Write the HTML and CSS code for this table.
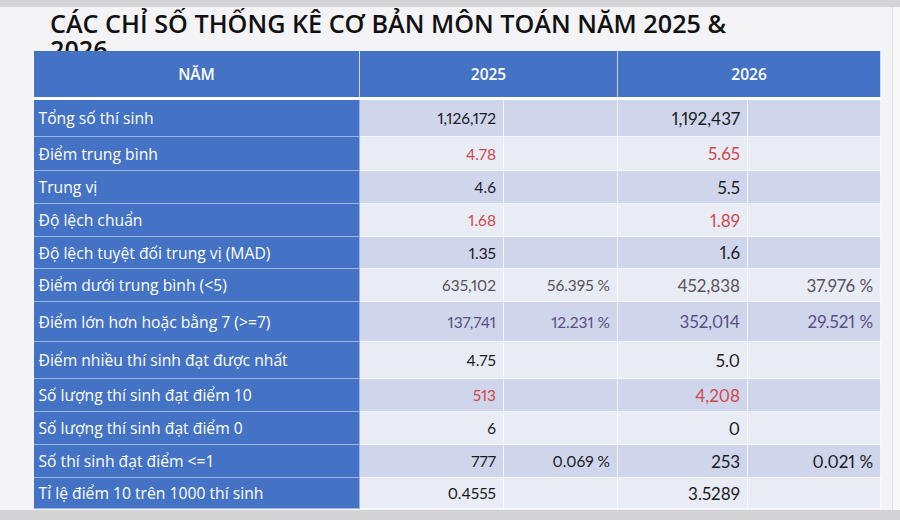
FILE: index.html
```html
<!DOCTYPE html>
<html lang="vi">
<head>
<meta charset="utf-8">
<link rel="stylesheet" href="styles.css">
</head>
<body>
<div class="topbar"></div>
<div class="slide">
  <div class="title-wrap">
    <h1 class="title">CÁC CHỈ SỐ THỐNG KÊ CƠ BẢN MÔN TOÁN NĂM 2025 &amp;<br>2026</h1>
  </div>
  <table class="stats">
    <colgroup>
      <col class="c-label"><col class="c-a"><col class="c-b"><col class="c-c"><col class="c-d">
    </colgroup>
    <thead>
      <tr class="head">
        <th>NĂM</th>
        <th colspan="2">2025</th>
        <th colspan="2">2026</th>
      </tr>
    </thead>
    <tbody>
      <tr class="dark h37">
        <td class="lbl">Tổng số thí sinh</td>
        <td class="n">1,126,172</td><td class="p"></td>
        <td class="n big">1,192,437</td><td class="p"></td>
      </tr>
      <tr class="light h34 red">
        <td class="lbl">Điểm trung bình</td>
        <td class="n">4.78</td><td class="p"></td>
        <td class="n big">5.65</td><td class="p"></td>
      </tr>
      <tr class="dark h33">
        <td class="lbl">Trung vị</td>
        <td class="n">4.6</td><td class="p"></td>
        <td class="n big">5.5</td><td class="p"></td>
      </tr>
      <tr class="light h33 red">
        <td class="lbl">Độ lệch chuẩn</td>
        <td class="n">1.68</td><td class="p"></td>
        <td class="n big">1.89</td><td class="p"></td>
      </tr>
      <tr class="dark h32">
        <td class="lbl">Độ lệch tuyệt đối trung vị (MAD)</td>
        <td class="n">1.35</td><td class="p"></td>
        <td class="n big">1.6</td><td class="p"></td>
      </tr>
      <tr class="light h33 gray">
        <td class="lbl">Điểm dưới trung bình (&lt;5)</td>
        <td class="n">635,102</td><td class="p">56.395 %</td>
        <td class="n big">452,838</td><td class="p big">37.976 %</td>
      </tr>
      <tr class="dark h40 purple">
        <td class="lbl">Điểm lớn hơn hoặc bằng 7 (&gt;=7)</td>
        <td class="n">137,741</td><td class="p">12.231 %</td>
        <td class="n big">352,014</td><td class="p big">29.521 %</td>
      </tr>
      <tr class="light h37">
        <td class="lbl">Điểm nhiều thí sinh đạt được nhất</td>
        <td class="n">4.75</td><td class="p"></td>
        <td class="n big">5.0</td><td class="p"></td>
      </tr>
      <tr class="dark h33 red">
        <td class="lbl">Số lượng thí sinh đạt điểm 10</td>
        <td class="n">513</td><td class="p"></td>
        <td class="n big">4,208</td><td class="p"></td>
      </tr>
      <tr class="light h33">
        <td class="lbl">Số lượng thí sinh đạt điểm 0</td>
        <td class="n">6</td><td class="p"></td>
        <td class="n big">0</td><td class="p"></td>
      </tr>
      <tr class="dark h33">
        <td class="lbl">Số thí sinh đạt điểm &lt;=1</td>
        <td class="n">777</td><td class="p">0.069 %</td>
        <td class="n big">253</td><td class="p big">0.021 %</td>
      </tr>
      <tr class="light h31">
        <td class="lbl">Tỉ lệ điểm 10 trên 1000 thí sinh</td>
        <td class="n">0.4555</td><td class="p"></td>
        <td class="n big">3.5289</td><td class="p"></td>
      </tr>
    </tbody>
  </table>
</div>
<div class="bottombar"></div>
</body>
</html>
```

FILE: styles.css
```css
html, body {
  margin: 0;
  padding: 0;
  width: 900px;
  height: 520px;
  overflow: hidden;
  background: #f8f8f9;
}

.topbar {
  height: 7px;
  background: #d5d5d8;
}

.slide {
  width: 893px;
  height: 503px;
  box-sizing: border-box;
  background: #f4f3f6;
  border-right: 1px solid #e2e2e6;
  padding-left: 33px;
}

.title-wrap {
  height: 44px;
  overflow: hidden;
  padding-left: 17px;
}

.title {
  margin: 0;
  padding-top: 3px;
  font-family: "Open Sans", "Noto Sans", sans-serif;
  font-weight: 600;
  font-size: 25.2px;
  line-height: 26px;
  color: #111;
}

.stats {
  border-collapse: collapse;
  table-layout: fixed;
  width: 847px;
  font-family: "Open Sans", "Noto Sans", sans-serif;
}

.c-label { width: 326px; }
.c-a { width: 144px; }
.c-b { width: 114px; }
.c-c { width: 130px; }
.c-d { width: 133px; }

.stats th,
.stats td {
  padding: 0;
  border: 1px solid rgba(255, 255, 255, 0.75);
  white-space: nowrap;
}

.head th {
  height: 46px;
  background: #4472c4;
  color: #fff;
  font-weight: 600;
  font-size: 15.5px;
  text-align: center;
  border-top: 0;
  border-bottom: 3px solid #fff;
}

.stats .lbl {
  background: #4472c4;
  color: #fff;
  font-size: 15.7px;
  padding-left: 5px;
  text-align: left;
  border-color: #9db4e2;
  border-left: 0;
}

.dark td { background: #cfd5ea; }
.light td { background: #e9ebf5; }

.n, .p {
  text-align: right;
  padding-right: 7px !important;
  font-family: "Lato", "Open Sans", sans-serif;
  font-variant-numeric: proportional-nums;
  font-feature-settings: "pnum" 1;
  font-size: 15.5px;
  color: #1b1b1f;
}

.big { font-size: 17px; }

.red .n { color: #d04a4c; }
.gray .n, .gray .p { color: #57545c; }
.purple .n, .purple .p { color: #5a4f86; }

.h37 td { height: 36px; }
.h34 td { height: 33px; }
.h33 td { height: 32px; }
.h32 td { height: 31px; }
.h40 td { height: 39px; }
.h31 td { height: 30px; }

.bottombar {
  height: 10px;
  background: #d3d3d6;
}
```
